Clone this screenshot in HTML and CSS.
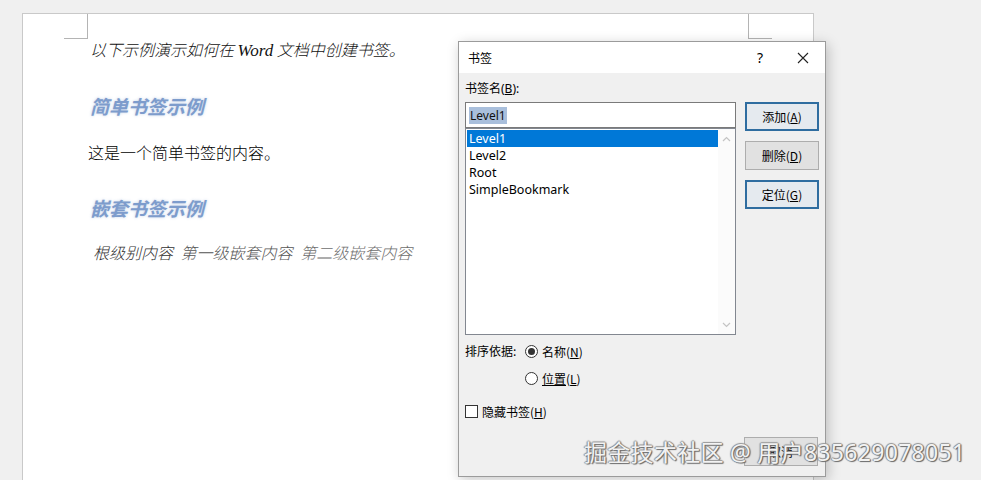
FILE: index.html
```html
<!DOCTYPE html>
<html lang="zh">
<head>
<meta charset="utf-8">
<title>书签</title>
<link rel="stylesheet" href="styles.css">
</head>
<body>
<div class="page">
  <div class="mark mark-l"></div>
  <div class="mark mark-r"></div>
  <div class="doc">
    <p class="intro">以下示例演示如何在 <span class="latin">Word</span> 文档中创建书签。</p>
    <h2 class="heading h-first">简单书签示例</h2>
    <p class="plain">这是一个简单书签的内容。</p>
    <h2 class="heading h-second">嵌套书签示例</h2>
    <p class="nested"><span class="c1">根级别内容</span> <span class="c2">第一级嵌套内容</span> <span class="c3">第二级嵌套内容</span></p>
  </div>
</div>

<div class="dialog">
  <div class="titlebar">
    <span class="title">书签</span>
    <span class="tb-btns">
      <span class="help">?</span>
      <svg class="close" width="12" height="12" viewBox="0 0 12 12"><path d="M1 1 L11 11 M11 1 L1 11" stroke="#222" stroke-width="1.1" fill="none"/></svg>
    </span>
  </div>
  <div class="dlg-body">
    <div class="label">书签名(<u>B</u>):</div>
    <div class="main">
      <div class="leftcol">
        <div class="input"><span class="sel">Level1</span></div>
        <div class="listbox">
          <div class="items">
            <div class="item active">Level1</div>
            <div class="item">Level2</div>
            <div class="item">Root</div>
            <div class="item">SimpleBookmark</div>
          </div>
          <div class="scroll">
            <svg width="9" height="6" viewBox="0 0 9 6"><path d="M1 5 L4.5 1.5 L8 5" stroke="#c4c4c4" stroke-width="1.2" fill="none"/></svg>
            <svg width="9" height="6" viewBox="0 0 9 6"><path d="M1 1 L4.5 4.5 L8 1" stroke="#c4c4c4" stroke-width="1.2" fill="none"/></svg>
          </div>
        </div>
      </div>
      <div class="btncol">
        <div class="btn default">添加(<u>A</u>)</div>
        <div class="btn">删除(<u>D</u>)</div>
        <div class="btn default">定位(<u>G</u>)</div>
      </div>
    </div>
    <div class="sort">
      <span class="sort-label">排序依据:</span>
      <div class="radios">
        <div class="radio-row"><span class="radio on"></span><span>名称(<u>N</u>)</span></div>
        <div class="radio-row"><span class="radio"></span><span><u>位置</u>(<u>L</u>)</span></div>
      </div>
    </div>
    <div class="check-row"><span class="check"></span><span>隐藏书签(<u>H</u>)</span></div>
    <div class="bottom"><div class="btn">取消</div></div>
  </div>
</div>

<div class="watermark">掘金技术社区 @ 用户835629078051</div>
</body>
</html>
```

FILE: styles.css
```css
* { box-sizing: border-box; }
html, body {
  margin: 0;
  padding: 0;
}
body {
  width: 981px;
  height: 480px;
  overflow: hidden;
  background: #f0f0f0;
  position: relative;
  font-family: "Noto Sans CJK SC", sans-serif;
}

/* document page */
.page {
  position: relative;
  margin: 13px 0 0 22px;
  width: 792px;
  height: 480px;
  background: #ffffff;
  border: 1px solid #c9c9c9;
  border-bottom: none;
}
.mark {
  position: absolute;
  top: 0;
  width: 24px;
  height: 25px;
  border-bottom: 1px solid #b4b4b4;
}
.mark-l { left: 41px; border-right: 1px solid #b4b4b4; }
.mark-r { left: 725px; border-left: 1px solid #b4b4b4; }

.doc {
  padding: 25px 0 0 67px;
  color: #111;
}
.doc .heading { margin: 0; }
.doc .intro {
  margin: 0;
  font-family: "Noto Sans CJK SC", sans-serif;
  font-size: 16px;
  line-height: 20px;
  font-style: italic;
  font-weight: 300;
  color: #111;
}
.intro .latin { font-family: "Liberation Serif", serif; font-size: 17px; }
.doc .heading {
  font-family: "Noto Sans CJK SC", sans-serif;
  font-size: 19px;
  line-height: 24px;
  font-style: italic;
  font-weight: 700;
  color: #7d9ccc;
  text-shadow: 0 0 3px rgba(125, 156, 204, 0.45);
}
.doc .h-first { margin: 33px 0 0; }
.doc .plain {
  margin: 24px 0 0 -2px;
  font-family: "Noto Sans CJK SC", sans-serif;
  font-size: 16px;
  line-height: 20px;
  font-weight: 300;
  color: #000;
}
.doc .h-second { margin: 34px 0 0; }
.doc .nested {
  margin: 22px 0 0 3px;
  font-family: "Noto Sans CJK SC", sans-serif;
  font-size: 16px;
  line-height: 20px;
  font-style: italic;
  font-weight: 300;
  word-spacing: 4px;
}
.c1 { color: #333; }
.c2 { color: #555; }
.c3 { color: #6e6e6e; }

/* dialog window */
.dialog {
  position: absolute;
  left: 458px;
  top: 41px;
  width: 368px;
  height: 436px;
  border: 1px solid #9b9b9b;
  background: #f0f0f0;
  box-shadow: 2px 3px 12px rgba(0, 0, 0, 0.22);
  font-family: "Noto Sans", "Noto Sans CJK SC", sans-serif;
  font-size: 12px;
  color: #000;
  display: flex;
  flex-direction: column;
}
.titlebar {
  height: 31px;
  background: #ffffff;
  display: flex;
  align-items: center;
  justify-content: space-between;
  padding: 0 16px 0 9px;
}
.title { font-family: "Noto Sans CJK SC", sans-serif; font-size: 12px; }
.tb-btns { display: flex; align-items: center; gap: 34px; }
.help { font-size: 14px; font-family: "Noto Sans", sans-serif; }
.close { display: block; }

.dlg-body {
  flex: 1;
  display: flex;
  flex-direction: column;
  padding: 8px 6px 0 6px;
}
.label { line-height: 16px; height: 16px; }
.main {
  display: flex;
  gap: 9px;
  margin-top: 5px;
}
.leftcol { width: 272px; display: flex; flex-direction: column; }
.input {
  height: 26px;
  background: #fff;
  border: 1px solid #7a7a7a;
  display: flex;
  align-items: center;
  padding-left: 3px;
}
.sel {
  background: #a9bfdc;
  color: #111;
  line-height: 17px;
  padding: 0 1px;
}
.listbox {
  height: 207px;
  background: #fff;
  border: 1px solid #828790;
  display: flex;
}
.items { flex: 1; padding: 1px 0 0 1px; }
.item { height: 17px; line-height: 17px; padding-left: 2px; font-size: 12.5px; }
.item.active { background: #0078d7; color: #fff; }
.scroll {
  width: 17px;
  background: #fbfbfb;
  display: flex;
  flex-direction: column;
  justify-content: space-between;
  align-items: center;
  padding: 7px 0 6px;
}
.btncol {
  display: flex;
  flex-direction: column;
  gap: 10px;
}
.btn {
  width: 74px;
  height: 29px;
  background: #e1e1e1;
  border: 1px solid #adadad;
  display: flex;
  align-items: center;
  justify-content: center;
  font-family: "Noto Sans CJK SC", sans-serif;
  font-size: 12px;
}
.btn.default {
  border: 2px solid #2f6da0;
  background: #e5eaef;
}

.sort {
  display: flex;
  margin-top: 6px;
  font-family: "Noto Sans CJK SC", sans-serif;
}
.sort-label { line-height: 18px; margin-top: 1px; width: 60px; }
.radios { display: flex; flex-direction: column; gap: 8px; }
.radio-row { display: flex; align-items: center; gap: 4px; height: 18px; margin-top: 1px; }
.radio {
  width: 13px;
  height: 13px;
  border: 1px solid #333;
  border-radius: 50%;
  background: #fff;
  display: flex;
  align-items: center;
  justify-content: center;
}
.radio.on::after {
  content: "";
  width: 7px;
  height: 7px;
  border-radius: 50%;
  background: #333;
}
.check-row {
  display: flex;
  align-items: center;
  gap: 4px;
  margin-top: 15px;
  height: 18px;
  font-family: "Noto Sans CJK SC", sans-serif;
}
.check {
  width: 13px;
  height: 13px;
  border: 1px solid #333;
  background: #fff;
}
.bottom {
  display: flex;
  justify-content: flex-end;
  margin-top: 17px;
  padding-right: 1px;
}

.watermark {
  position: absolute;
  left: 584px;
  top: 436px;
  font-family: "Noto Sans", "Noto Sans CJK SC", sans-serif;
  font-size: 23px;
  letter-spacing: 0.3px;
  line-height: 32px;
  color: rgba(255, 255, 255, 0.92);
  white-space: nowrap;
  text-shadow: 1px 1px 1px #6a6a6a, -1px 0 1px #888, 0 -1px 1px #999, 1px 0 1px #777;
}
```
